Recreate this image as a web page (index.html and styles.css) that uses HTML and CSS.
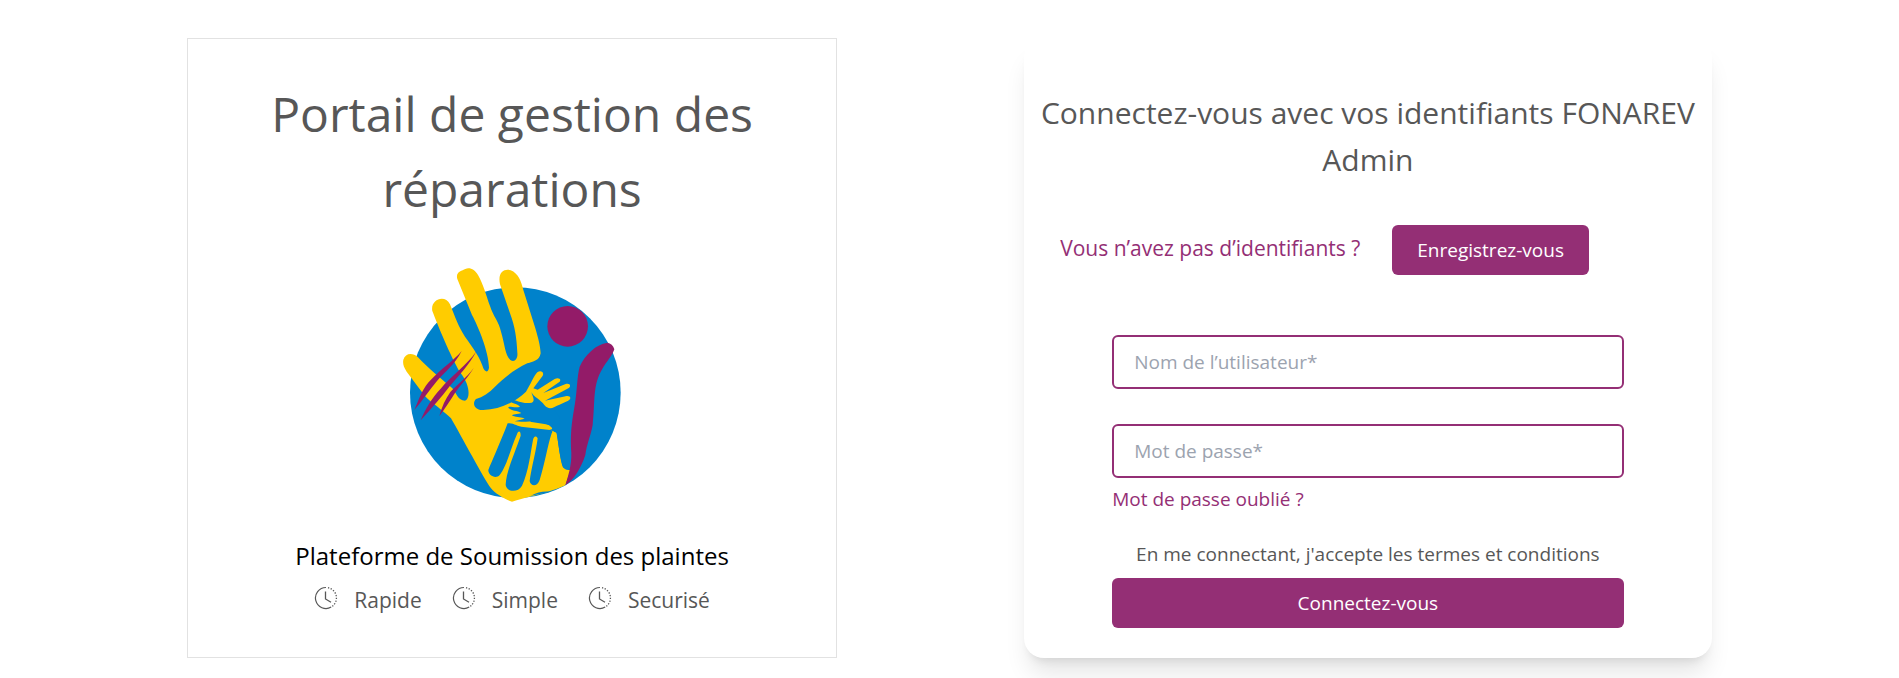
FILE: index.html
```html
<!DOCTYPE html>
<html lang="fr">
<head>
<meta charset="utf-8">
<meta name="viewport" content="width=device-width, initial-scale=1">
<title>Portail de gestion des réparations</title>
<link rel="stylesheet" href="styles.css">
</head>
<body>
<svg class="sprite" aria-hidden="true">
  <symbol id="clock" viewBox="0 0 24 24">
    <path d="M12 1.500a10.500 10.500 0 1 0 5.200 19.600" fill="none" stroke="currentColor" stroke-width="1.200"/>
    <path d="M14 1.700a10.500 10.500 0 0 1 3.800 19" fill="none" stroke="currentColor" stroke-width="1.300" stroke-dasharray="1.300 1.500"/>
    <path d="M11.500 5.500v7.500l5.500 3.200" fill="none" stroke="currentColor" stroke-width="1.300"/>
  </symbol>
</svg>
<main class="page">
  <section class="intro">
    <h1 class="intro-title">Portail de gestion des réparations</h1>
    <svg class="logo" viewBox="0 0 735 780" role="img" aria-label="FONAREV">
      <circle cx="376" cy="413" r="316" fill="#0082cb"/>
      <path fill="#fc0" d="M366 740C340 732 315 714 303 700C280 668 215 545 183 490C165 470 120 440 104 422L50 350C40 335 38 325 40 314C46 294 68 292 84 307C110 336 160 376 187 400C200 415 203 437 225 437C242 430 240 388 210 352C180 300 145 215 127 168C120 135 164 116 180 148C195 185 205 215 225 245C250 280 272 310 280 340C286 353 295 352 297 338C296 290 265 215 246 180L202 72C196 50 215 48 226 42C240 36 255 45 264 60C280 88 288 120 300 153C310 185 327 200 333 230C345 270 345 300 361 315C374 323 384 312 382 293C380 250 375 215 360 175L330 88C322 50 345 40 362 46C385 55 394 80 400 105L436 220C446 255 450 270 452 295C448 317 430 320 412 325C375 342 340 370 315 395C298 414 278 426 258 432C245 445 254 467 280 465C330 464 372 443 408 410C422 388 430 365 442 352C452 344 465 352 457 364L430 400L443 404L494 372C505 367 515 372 509 380L460 414L527 387C540 383 545 394 535 400L465 437L530 423C543 422 545 433 533 438C510 447 490 460 474 462L420 500L482 510C490 518 488 525 478 524L494 530L500 533C506 570 512 625 520 638L542 645L526 691C490 708 445 718 366 740Z"/>
      <path fill="#0082cb" d="M424 411C431 426 452 434 463 450C470 459 483 463 492 461L510 490L505 535L493 530L487 521C484 511 464 504 442 497C420 499 396 502 374 499L404 491C396 485 382 488 367 482C365 476 384 479 394 474C383 466 363 468 355 458C354 450 375 461 390 455C384 445 365 447 361 437C366 427 394 450 425 443C437 438 428 425 424 411Z"/>
      <path fill="#0082cb" d="M353 505C370 502 382 515 400 516L480 525C487 525 489 529 485 535C472 575 466 620 449 675C442 697 421 694 419 678C424 640 438 590 443 550C438 540 431 544 429 555C422 590 416 650 396 692C384 714 350 712 347 690C348 650 376 590 392 542C392 527 385 525 380 540C362 580 350 635 329 660C317 674 294 661 295 645C305 620 330 565 353 505Z"/>
      <path fill="#0082cb" d="M498 525L548 470L546 642C536 648 522 645 518 632C508 600 505 560 498 525Z"/>
      <path fill="#0082cb" d="M422 722Q450 706 484 710Z"/>
      <g fill="#931b68">
        <circle cx="533" cy="214" r="61"/>
        <path d="M673 283C667 302 650 320 638 340C607 390 616 440 608 510C600 550 591 565 586 600C573 640 551 675 526 691C539 650 547 618 543 580C541 520 548 490 555 445C562 400 561 365 569 335C584 300 619 267 652 263C662 265 670 271 673 283Z"/>
        <path d="M215 288C195 328 165 350 141 378C118 405 98 437 73 465C88 430 98 398 125 372C155 340 190 318 215 288ZM260 287C234 335 207 360 179 394C153 428 125 460 92 496C108 458 125 430 152 401C185 360 230 332 260 287ZM251 339C232 370 211 390 193 417C176 444 164 462 148 483C156 455 166 432 181 411C204 386 228 370 251 339Z"/>
      </g>
    </svg>
    <h2 class="intro-subtitle">Plateforme de Soumission des plaintes</h2>
    <ul class="features">
      <li class="feature"><svg class="feature-icon" aria-hidden="true"><use href="#clock"/></svg>Rapide</li>
      <li class="feature"><svg class="feature-icon" aria-hidden="true"><use href="#clock"/></svg>Simple</li>
      <li class="feature"><svg class="feature-icon" aria-hidden="true"><use href="#clock"/></svg>Securisé</li>
    </ul>
  </section>
  <section class="login">
    <h2 class="login-title">Connectez-vous avec vos identifiants FONAREV Admin</h2>
    <div class="register">
      <span class="register-text">Vous n’avez pas d’identifiants ?</span>
      <button class="button" type="button">Enregistrez-vous</button>
    </div>
    <form class="login-form">
      <input class="field" type="text" aria-label="Nom de l’utilisateur" placeholder="Nom de l’utilisateur*">
      <input class="field" type="password" aria-label="Mot de passe" placeholder="Mot de passe*">
      <a class="forgot" href="#">Mot de passe oublié ?</a>
      <p class="terms">En me connectant, j'accepte les termes et conditions</p>
      <button class="button" type="submit">Connectez-vous</button>
    </form>
  </section>
</main>
</body>
</html>
```

FILE: styles.css
```css
* { box-sizing: border-box; }
body {
  margin: 0;
  background: #fff;
  color: #575757;
  font-family: "Segoe UI", "Open Sans", "Noto Sans", sans-serif;
  font-size: 19px;
  line-height: 30px;
}
h1, h2, p, ul { margin: 0; padding: 0; font-weight: 400; }
.sprite { display: none; }
.page {
  display: flex;
  justify-content: space-evenly;
  align-items: stretch;
  padding: 38px 0 20px;
}
.intro {
  width: 34.2%;
  border: 1px solid #e2e2e2;
  padding: 37px 48px 39px;
  display: flex;
  flex-direction: column;
  align-items: center;
  text-align: center;
}
.intro-title { font-size: 48px; line-height: 75px; }
.logo { width: 245px; height: 260px; margin-top: 29px; }
.intro-subtitle {
  margin-top: 21px;
  color: #000;
  font-size: 24px;
  line-height: 40px;
}
.features { display: flex; gap: 30px; margin-top: 6px; list-style: none; font-size: 21px; line-height: 36px; }
.feature { display: flex; gap: 16px; }
.feature-icon { width: 24px; height: 24px; margin-top: 4px; }
.login {
  width: 36.2%;
  padding: 51px 12px 30px;
  border-radius: 20px;
  background: #fff;
  box-shadow: 0 20px 25px -5px rgba(0, 0, 0, .1), 0 8px 10px -6px rgba(0, 0, 0, .1);
}
.login-title { font-size: 30px; line-height: 47px; text-align: center; }
.register {
  display: flex;
  align-items: center;
  gap: 32px;
  margin-top: 42px;
  padding-left: 24px;
  color: #942f75;
}
.register-text { padding-bottom: 4px; font-size: 21px; }
.button {
  height: 50px;
  padding: 0 25px;
  border: 0;
  border-radius: 6px;
  background: #942f75;
  color: #fff;
  font: inherit;
}
.login-form {
  display: flex;
  flex-direction: column;
  margin: 60px 76px 0;
}
.field {
  width: 100%;
  height: 54px;
  padding: 0 20px;
  border: 2px solid #942f75;
  border-radius: 6px;
  background: #fff;
  color: #575757;
  font: inherit;
}
.field + .field { margin-top: 35px; }
.field::placeholder { color: #9ca3af; opacity: 1; }
.forgot { align-self: flex-start; margin-top: 6px; color: #942f75; text-decoration: none; }
.terms { margin: 25px 0 9px; text-align: center; }
```
